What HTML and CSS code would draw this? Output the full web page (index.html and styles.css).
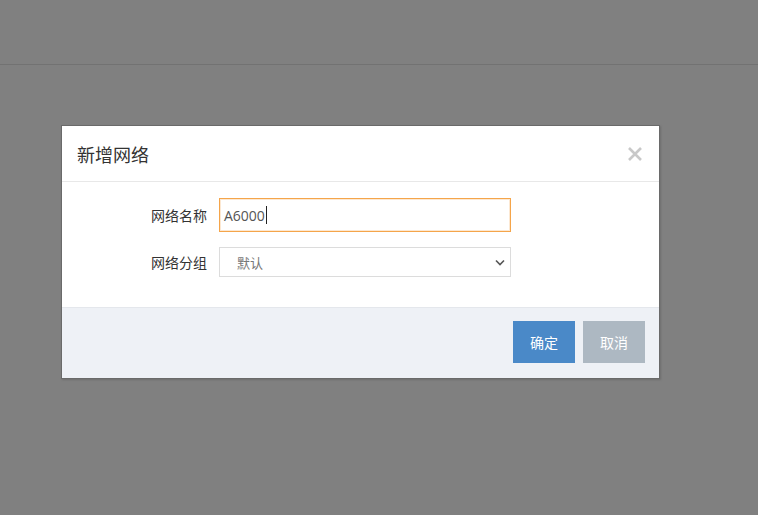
FILE: index.html
```html
<!DOCTYPE html>
<html lang="zh-CN">
<head>
<meta charset="utf-8">
<title>新增网络</title>
<link rel="stylesheet" href="styles.css">
</head>
<body>
<div class="topbar"></div>
<div class="modal">
  <div class="modal-header">
    <h4 class="modal-title">新增网络</h4>
    <button class="close" type="button" aria-label="关闭">
      <svg width="16" height="16" viewBox="0 0 16 16"><path d="M2 2L14 14M14 2L2 14" stroke="#c8c8c8" stroke-width="2.6" fill="none"/></svg>
    </button>
  </div>
  <div class="modal-body">
    <div class="form-row">
      <label class="form-label">网络名称</label>
      <div class="input focus">A6000<span class="caret"></span></div>
    </div>
    <div class="form-row">
      <label class="form-label">网络分组</label>
      <div class="select">
        <span>默认</span>
        <svg class="chev" width="10" height="7" viewBox="0 0 10 7"><path d="M1 1.5L5 5.5L9 1.5" stroke="#555" stroke-width="1.6" fill="none"/></svg>
      </div>
    </div>
  </div>
  <div class="modal-footer">
    <button class="btn btn-primary" type="button">确定</button>
    <button class="btn btn-cancel" type="button">取消</button>
  </div>
</div>
</body>
</html>
```

FILE: styles.css
```css
html, body {
  margin: 0;
  padding: 0;
  height: 100%;
}
body {
  background: #808080;
  font-family: "Open Sans", "Noto Sans CJK SC", sans-serif;
  color: #333;
}
.topbar {
  height: 64px;
  border-bottom: 1px solid #727272;
}
.modal {
  margin: 60px 0 0 61px;
  width: 599px;
  box-sizing: border-box;
  border: 1px solid #6a6a6a;
  background: #fff;
  box-shadow: 1px 1px 2px rgba(0,0,0,0.15);
}
.modal-header {
  height: 55px;
  border-bottom: 1px solid #e8e8e8;
  display: flex;
  align-items: center;
  justify-content: space-between;
  padding: 0 15px;
}
.modal-title {
  margin: 0;
  font-family: "Noto Sans CJK SC", sans-serif;
  font-size: 18px;
  font-weight: 400;
  color: #333;
}
.close {
  border: 0;
  background: none;
  padding: 0;
  margin-right: 1px;
  width: 16px;
  height: 16px;
  display: flex;
}
.modal-body {
  padding: 16px 15px 30px;
  display: flex;
  flex-direction: column;
  gap: 15px;
}
.form-row {
  display: grid;
  grid-template-columns: 130px 292px;
  column-gap: 12px;
  align-items: center;
}
.form-label {
  text-align: right;
  font-family: "Noto Sans CJK SC", sans-serif;
  font-size: 14px;
  color: #333;
}
.input {
  height: 34px;
  box-sizing: border-box;
  border: 1px solid #f5a54a;
  box-shadow: inset 0 0 0 1px rgba(245,165,74,0.25);
  padding: 0 0 0 4px;
  font-size: 14px;
  color: #555;
  display: flex;
  align-items: center;
}
.caret {
  display: inline-block;
  width: 1px;
  height: 18px;
  background: #222;
  margin-left: 1px;
}
.select {
  height: 30px;
  box-sizing: border-box;
  border: 1px solid #dcdcdc;
  background: #fff;
  display: flex;
  align-items: center;
  justify-content: space-between;
  padding: 0 5px 0 17px;
  font-family: "Noto Sans CJK SC", sans-serif;
  font-size: 13px;
  color: #777;
}
.chev {
  display: block;
}
.modal-footer {
  border-top: 1px solid #e4e7ec;
  background: #eef1f6;
  display: flex;
  justify-content: flex-end;
  gap: 8px;
  padding: 13px 14px 15px;
}
.btn {
  width: 62px;
  height: 42px;
  border: 0;
  font-family: "Noto Sans CJK SC", sans-serif;
  font-size: 14px;
  color: #fff;
  padding: 0;
}
.btn-primary {
  background: #4a89c8;
}
.btn-cancel {
  background: #adb8c2;
}
```
